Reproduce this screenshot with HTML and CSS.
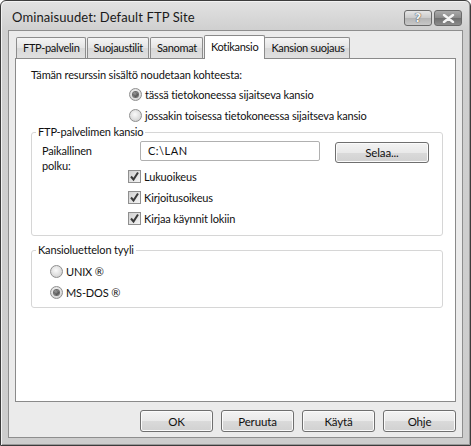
FILE: index.html
```html
<!DOCTYPE html>
<html>
<head>
<meta charset="utf-8">
<link rel="stylesheet" href="styles.css">
</head>
<body>
<div class="window">
  <div class="titlebar">
    <span class="title">Ominaisuudet: Default FTP Site</span>
    <div class="caption-buttons">
      <div class="cap-btn help">?</div>
      <div class="cap-btn close">
        <svg width="13" height="9" viewBox="0 0 13 9"><path d="M2 1 L11 8 M11 1 L2 8" stroke="#f4f4f4" stroke-width="2.4" stroke-linecap="round"/></svg>
      </div>
    </div>
  </div>
  <div class="client">
    <div class="tabs">
      <div class="tab">FTP-palvelin</div>
      <div class="tab">Suojaustilit</div>
      <div class="tab">Sanomat</div>
      <div class="tab active">Kotikansio</div>
      <div class="tab">Kansion suojaus</div>
    </div>
    <div class="panel">
      <div class="intro">Tämän resurssin sisältö noudetaan kohteesta:</div>
      <div class="option-list top-opts">
        <div class="opt"><span class="radio checked"></span><span>tässä tietokoneessa sijaitseva kansio</span></div>
        <div class="opt"><span class="radio"></span><span>jossakin toisessa tietokoneessa sijaitseva kansio</span></div>
      </div>
      <fieldset class="group g1">
        <legend>FTP-palvelimen kansio</legend>
        <div class="path-row">
          <div class="path-label">Paikallinen<br>polku:</div>
          <div class="input">C:\LAN</div>
          <div class="btn browse">Selaa...</div>
        </div>
        <div class="option-list checks">
          <div class="opt"><span class="check"><svg width="11" height="11" viewBox="0 0 11 11"><path d="M2 5.5 L4.5 8.5 L9 1.5" fill="none" stroke="#3a3a3a" stroke-width="2"/></svg></span><span>Lukuoikeus</span></div>
          <div class="opt"><span class="check"><svg width="11" height="11" viewBox="0 0 11 11"><path d="M2 5.5 L4.5 8.5 L9 1.5" fill="none" stroke="#3a3a3a" stroke-width="2"/></svg></span><span>Kirjoitusoikeus</span></div>
          <div class="opt"><span class="check"><svg width="11" height="11" viewBox="0 0 11 11"><path d="M2 5.5 L4.5 8.5 L9 1.5" fill="none" stroke="#3a3a3a" stroke-width="2"/></svg></span><span>Kirjaa käynnit lokiin</span></div>
        </div>
      </fieldset>
      <fieldset class="group g2">
        <legend>Kansioluettelon tyyli</legend>
        <div class="option-list style-opts">
          <div class="opt"><span class="radio"></span><span>UNIX ®</span></div>
          <div class="opt"><span class="radio checked"></span><span>MS-DOS ®</span></div>
        </div>
      </fieldset>
    </div>
    <div class="footer">
      <div class="btn">OK</div>
      <div class="btn">Peruuta</div>
      <div class="btn">Käytä</div>
      <div class="btn">Ohje</div>
    </div>
  </div>
</div>
</body>
</html>
```

FILE: styles.css
```css
html, body {
  margin: 0;
  padding: 0;
  background: #ffffff;
}
body {
  width: 471px;
  height: 446px;
  overflow: hidden;
  font-family: Lato, "Open Sans", sans-serif;
  font-size: 11px;
  letter-spacing: -0.15px;
  color: #111;
}
.window {
  box-sizing: border-box;
  width: 471px;
  height: 446px;
  border: 1px solid #3c3c3c;
  border-radius: 6px 6px 0 0;
  background: linear-gradient(#e2e2e2, #cfcfcf 30px, #cdcdcd);
  box-shadow: inset 1px 1px 0 #f2f2f2, inset -1px -1px 0 #9a9a9a;
  display: flex;
  flex-direction: column;
  padding: 0 7px 7px 7px;
}
.titlebar {
  height: 29px;
  display: flex;
  align-items: flex-start;
  justify-content: space-between;
}
.title {
  margin-top: 8px;
  margin-left: 4px;
  font-size: 13px;
  letter-spacing: 0.1px;
  color: #1a1a1a;
}
.caption-buttons {
  display: flex;
  gap: 2px;
  margin-top: 9px;
  margin-right: 1px;
}
.cap-btn {
  box-sizing: border-box;
  width: 28px;
  height: 16px;
  border: 1px solid #6a6a6a;
  border-radius: 3px;
  display: flex;
  align-items: center;
  justify-content: center;
}
.help {
  background: linear-gradient(#e6e6e6, #cacaca 50%, #b4b4b4 51%, #c8c8c8);
  font-family: "DejaVu Sans", sans-serif;
  font-size: 12px;
  font-weight: bold;
  color: #f2f2f2;
  text-shadow: 0 0 1px #444, 0 0 1px #444;
  line-height: 14px;
}
.close {
  background: linear-gradient(#a9a9a9, #8a8a8a 50%, #6e6e6e 51%, #8c8c8c);
}
.client {
  flex: 1;
  background: #ebebeb;
  border: 1px solid #8e8e8e;
  padding: 4px 6px 0 6px;
  display: flex;
  flex-direction: column;
}
.tabs {
  display: flex;
  align-items: flex-end;
  padding-left: 1px;
  height: 23px;
  position: relative;
  z-index: 1;
}
.tab {
  box-sizing: border-box;
  height: 21px;
  padding: 0 5px 0 6px;
  margin-right: 1px;
  border: 1px solid #8c8c8c;
  border-bottom: none;
  border-radius: 2px 2px 0 0;
  background: linear-gradient(#f5f5f5, #e4e4e4 50%, #d8d8d8 51%, #e0e0e0);
  line-height: 20px;
  letter-spacing: -0.3px;
}
.tab.active {
  height: 24px;
  background: #ffffff;
  margin: 0 -1px -1px 0;
  padding: 0 6px 0 6px;
  line-height: 21px;
  border-color: #8a8a8a;
}
.panel {
  box-sizing: border-box;
  height: 344px;
  background: #ffffff;
  border: 1px solid #8a8a8a;
  padding: 8px 12px 0 15px;
}
.intro {
  line-height: 16px;
}
.option-list {
  display: flex;
  flex-direction: column;
}
.opt {
  display: flex;
  align-items: center;
  height: 21px;
  gap: 3px;
}
.top-opts {
  margin: 1px 0 0 98px;
}
.radio {
  box-sizing: border-box;
  width: 13px;
  height: 13px;
  border-radius: 50%;
  border: 1px solid #8f8f8f;
  background: radial-gradient(circle at 45% 40%, #fafafa, #dcdcdc 60%, #c4c4c4);
  display: flex;
  align-items: center;
  justify-content: center;
}
.radio.checked::after {
  content: "";
  width: 5px;
  height: 5px;
  border-radius: 50%;
  background: radial-gradient(circle at 40% 35%, #9a9a9a, #262626);
  box-shadow: 0 0 0 1px #6a6a6a;
}
.check {
  box-sizing: border-box;
  width: 13px;
  height: 13px;
  border: 1px solid #8f8f8f;
  background: linear-gradient(135deg, #d0d0d0, #f4f4f4);
  display: flex;
  align-items: center;
  justify-content: center;
}
.group {
  margin: 0;
  border: 1px solid #d6d6d6;
  border-radius: 3px;
  min-width: 0;
  box-sizing: border-box;
}
.group legend {
  padding: 0 2px;
  line-height: 12px;
}
.g1 {
  height: 110px;
  padding: 3px 12px 0 10px;
}
.g1 legend {
  margin-left: -6px;
}
.path-row {
  display: grid;
  grid-template-columns: 98px 180px 94px;
  align-items: start;
  height: 25px;
}
.path-label {
  line-height: 15px;
  margin-top: 2px;
}
.input {
  box-sizing: border-box;
  height: 20px;
  border: 1px solid #b0b0b0;
  border-radius: 2px;
  padding-left: 7px;
  line-height: 18px;
  letter-spacing: 0.5px;
}
.btn {
  box-sizing: border-box;
  width: 73px;
  height: 22px;
  border: 1px solid #6f6f6f;
  border-radius: 3px;
  background: linear-gradient(#f3f3f3, #e9e9e9 50%, #dadada 51%, #d1d1d1);
  box-shadow: inset 0 0 0 1px #fbfbfb;
  display: flex;
  align-items: center;
  justify-content: center;
  font-size: 11.5px;
}
.browse {
  width: 94px;
  height: 21px;
  margin: 1px 0 0 15px;
}
.checks {
  margin-left: 86px;
}
.g2 {
  margin-top: 8px;
  height: 64px;
  padding: 0 10px 0 18px;
}
.g2 legend {
  margin-left: -14px;
}
.style-opts {
  margin-top: 5px;
}
.footer {
  display: flex;
  justify-content: flex-end;
  gap: 8px;
  padding-top: 8px;
}
```
